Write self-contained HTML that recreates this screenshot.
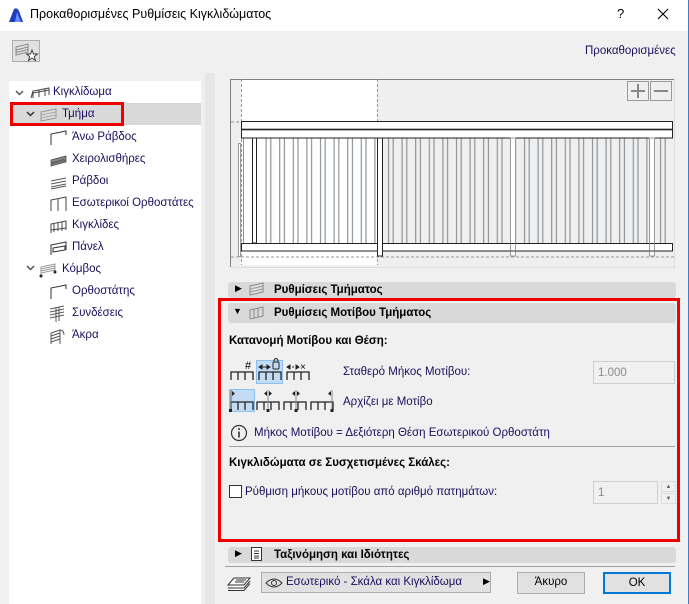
<!DOCTYPE html>
<html><head><meta charset="utf-8"><style>
*{box-sizing:border-box;margin:0;padding:0}
body{width:689px;height:604px;background:#f0f0f0;font-family:"Segoe UI","Liberation Sans","DejaVu Sans",sans-serif;font-size:11.5px;color:#000;position:relative;overflow:hidden}
.a{position:absolute;white-space:nowrap}
.tree span{position:absolute;white-space:nowrap;color:#1a0f5c}
.hdr{position:absolute;left:228px;width:448px;background:#d9d9d9;border-radius:3px}
.b{font-weight:bold}
.inp{position:absolute;background:#f0f0f0;border:1px solid #cfcfcf;color:#8a8a8a;padding:5px 4px}
.btn{position:absolute;background:#e1e1e1;border:1px solid #adadad;text-align:center;line-height:19px}
</style></head><body>
<!-- title bar -->
<div class="a" style="left:0;top:0;width:689px;height:31px;background:#fff"></div>
<div class="a" style="left:688px;top:0;width:1px;height:604px;background:#3c7fd1"></div>
<svg class="a" style="left:8px;top:7px" width="16" height="16"><rect x="0" y="0" width="16" height="16" fill="#fff"/><path d="M1 15 L6 2 Q9 0 11 4 L15 15 Z" fill="#1c3fbf"/><path d="M7 15 L9 5 L13 15Z" fill="#6e8cff"/></svg>
<div class="a" style="left:30px;top:7px;font-size:12.5px">Προκαθορισμένες Ρυθμίσεις Κιγκλιδώματος</div>
<div class="a" style="left:617px;top:6px;font-size:13px">?</div>
<svg class="a" style="left:657px;top:8px" width="12" height="12"><path d="M1 1 L11 11 M11 1 L1 11" stroke="#000" stroke-width="1.1"/></svg>
<!-- favorite button -->
<div class="a" style="left:12px;top:40px;width:28px;height:22px;border:1px solid #adadad;background:#e1e1e1"></div>
<svg class="a" style="left:14px;top:42px" width="26" height="20"><path d="M2 5 L14 2 L14 10 L2 13Z M2 8 L14 5 M2 10.5L14 7.5" stroke="#888" fill="none"/><path d="M18 8 L19.5 12 L23.5 12 L20.3 14.5 L21.5 18.5 L18 16 L14.5 18.5 L15.7 14.5 L12.5 12 L16.5 12Z" fill="#fff" stroke="#333" stroke-width="0.9"/></svg>
<div class="a" style="left:585px;top:45px;color:#1a0f5c">Προκαθορισμένες</div>
<!-- tree -->
<div class="a" style="left:9px;top:81px;width:192px;height:523px;background:#fff"></div>
<div class="a" style="left:205px;top:73px;width:10px;height:531px;background:#e6e6e6"></div>
<div class="a" style="left:10px;top:103px;width:191px;height:22px;background:#d9d9d9"></div>
<div class="a" style="left:10px;top:102px;width:114px;height:24px;border:3px solid #e00"></div>
<svg class="a" style="left:0;top:0" width="60" height="280"><g stroke="#555" stroke-width="1.5" fill="none"><path d="M16 91 L19.5 94.5 L23 91"/><path d="M27 112 L30.5 115.5 L34 112" stroke="#333"/><path d="M27 266 L30.5 269.5 L34 266"/></g></svg>
<div class="tree">
<svg class="a" style="left:30px;top:87px" width="22" height="12"><path d="M1 11 L3 4 L19 1 L19 8 M3 4 L3 11 M9 3 L9 10 M15 2 L15 9 M3 6 L19 3" stroke="#444" fill="none"/></svg>
<span style="left:53px;top:86px">Κιγκλίδωμα</span>
<svg class="a" style="left:40px;top:108px" width="18" height="14"><path d="M1 4 L16 1 L16 10 L1 13Z" fill="#ddd" stroke="#999"/><path d="M1 7 L16 4 M1 10 L16 7" stroke="#aaa"/></svg>
<span style="left:62px;top:108px">Τμήμα</span>
<svg class="a" style="left:50px;top:130px" width="18" height="16"><path d="M1 15 L1 4 L16 1 L16 5" stroke="#333" fill="none"/></svg>
<span style="left:72px;top:131px">Άνω Ράβδος</span>
<svg class="a" style="left:50px;top:152px" width="18" height="16"><path d="M1 8 L16 4 L16 7 L1 11Z M1 12 L16 8 L16 10 L1 14Z" fill="#888" stroke="#444" stroke-width="0.7"/></svg>
<span style="left:72px;top:153px">Χειρολισθήρες</span>
<svg class="a" style="left:50px;top:174px" width="18" height="16"><path d="M1 7 L16 4 M1 10 L16 7 M1 13 L16 10 M1 15 L16 12" stroke="#555" fill="none"/></svg>
<span style="left:72px;top:175px">Ράβδοι</span>
<svg class="a" style="left:50px;top:196px" width="18" height="16"><path d="M1 15 L1 4 L16 1 L16 15 M8 3 L8 15" stroke="#444" fill="none"/></svg>
<span style="left:72px;top:197px">Εσωτερικοί Ορθοστάτες</span>
<svg class="a" style="left:50px;top:218px" width="18" height="16"><path d="M1 15 L1 6 L16 3 L16 12 M4 6 L4 14 M8 5 L8 13 M12 4 L12 13 M1 12 L16 10" stroke="#444" fill="none"/></svg>
<span style="left:72px;top:219px">Κιγκλίδες</span>
<svg class="a" style="left:50px;top:240px" width="18" height="16"><path d="M1 15 L1 5 L16 2 L16 10 M3 8 L15 6 L15 10 L3 12Z" stroke="#333" fill="none"/></svg>
<span style="left:72px;top:241px">Πάνελ</span>
<svg class="a" style="left:38px;top:262px" width="20" height="16"><path d="M3 14 L3 5 L17 2 L17 10 M3 7 L17 4 M3 9 L17 6 M3 11 L17 8" stroke="#999" fill="none"/><circle cx="3" cy="14" r="1.5" fill="#222"/><circle cx="17" cy="10" r="1.5" fill="#222"/></svg>
<span style="left:62px;top:263px">Κόμβος</span>
<svg class="a" style="left:50px;top:284px" width="18" height="16"><path d="M1 15 L1 4 L16 1 L16 5" stroke="#333" fill="none"/></svg>
<span style="left:72px;top:285px">Ορθοστάτης</span>
<svg class="a" style="left:48px;top:305px" width="20" height="18"><path d="M2 4 L16 1 M2 7 L16 4 M2 10 L16 7 M2 13 L16 10 M8 3 L8 17 M11 2 L11 16" stroke="#555" fill="none"/></svg>
<span style="left:72px;top:307px">Συνδέσεις</span>
<svg class="a" style="left:48px;top:327px" width="20" height="18"><path d="M3 6 L12 3 Q16 3 16 8 M3 9 L12 6 M3 12 L12 9 M3 15 L12 12 M12 3 L12 17 M3 6 L3 17" stroke="#555" fill="none"/></svg>
<span style="left:72px;top:329px">Άκρα</span>
</div>
<!-- preview -->
<svg class="a" style="left:230px;top:79px" width="445" height="189">
<defs><pattern id="p" x="35.5" y="0" width="13.6" height="10" patternUnits="userSpaceOnUse"><rect x="0" y="0" width="1.2" height="10" fill="#8d949a"/><rect x="4.7" y="0" width="1.2" height="10" fill="#8d949a"/></pattern></defs>
<rect x="0" y="0" width="445" height="189" fill="#efefef"/>
<rect x="11" y="0" width="136" height="186" fill="#fff"/>
<path d="M0.5 0 V189 M0 0.5 H445" stroke="#808080"/>
<path d="M444.5 0 V189 M0 188.5 H445" stroke="#ddd"/>
<path d="M11.5 0 V186 M147.5 0 V186" stroke="#999" stroke-dasharray="3,2"/>
<path d="M1 43 H11 M1 178 H444" stroke="#999" stroke-dasharray="3,2"/>
<rect x="35" y="59" width="406" height="105" fill="url(#p)"/>
<rect x="13" y="59" width="1" height="105" fill="#8d949a"/>
<rect x="8.5" y="64.5" width="2" height="113" fill="#fff" stroke="#999"/>
<rect x="22.5" y="59" width="4" height="105" fill="#fff" stroke="#222"/>
<rect x="11.5" y="42.5" width="431" height="16.5" fill="#fff" stroke="#222"/>
<rect x="11.5" y="49.7" width="431" height="1.6" fill="#222"/>
<rect x="11.5" y="164.5" width="431" height="7.5" fill="#fff" stroke="#222"/>
<rect x="147.5" y="59" width="5" height="118" fill="#fff" stroke="#222"/>
<rect x="280.5" y="59" width="5" height="118" fill="#fff" stroke="#999"/>
<rect x="281" y="164" width="4" height="9" fill="#fff"/>
<rect x="419.5" y="59" width="5" height="118" fill="#fff" stroke="#999"/>
<rect x="420" y="164" width="4" height="9" fill="#fff"/>
<path d="M280.5 164.5 H285.5 M280.5 172 H285.5 M419.5 164.5 H424.5 M419.5 172 H424.5" stroke="#222"/>
<rect x="397.5" y="2.5" width="21" height="19" fill="#efefef" stroke="#999"/>
<rect x="420.5" y="2.5" width="21" height="19" fill="#efefef" stroke="#999"/>
<path d="M401 12 H415 M408 5 V19 M424 12 H438" stroke="#888" stroke-width="2"/>
</svg>
<!-- section headers -->
<div class="hdr" style="top:282px;height:16px"></div>
<div class="a" style="left:235px;top:283px;font-size:9px">▶</div>
<svg class="a" style="left:249px;top:282px" width="16" height="14"><path d="M1 4 L14 1 L14 10 L1 13Z" fill="#ddd" stroke="#888"/><path d="M1 7 L14 4 M1 10 L14 7" stroke="#999"/></svg>
<div class="a b" style="left:274px;top:284px">Ρυθμίσεις Τμήματος</div>
<div class="a" style="left:218px;top:298px;width:462px;height:244px;border:3px solid #e00"></div>
<div class="hdr" style="top:303px;height:20px"></div>
<div class="a" style="left:233px;top:306px;font-size:9px">▼</div>
<svg class="a" style="left:249px;top:305px" width="16" height="15"><path d="M1 14 L1 5 L14 2 L14 11 L1 14 M5 4 L5 13 M9 3 L9 12" stroke="#888" fill="none"/></svg>
<div class="a b" style="left:274px;top:307px">Ρυθμίσεις Μοτίβου Τμήματος</div>
<div class="a b" style="left:229px;top:335px">Κατανομή Μοτίβου και Θέση:</div>
<!-- motif icons -->
<div class="a" style="left:256px;top:360px;width:27px;height:24px;background:#c4dcf3;border:1px solid #8cc0ee"></div>
<div class="a" style="left:229px;top:389px;width:26px;height:23px;background:#c4dcf3;border:1px solid #8cc0ee"></div>
<svg class="a" style="left:229px;top:358px" width="112" height="56">
<g stroke="#222" fill="none" stroke-width="1.3">
<path d="M2 22 V14 H24 V22 M9 14 V22 M16 14 V22"/>
<path d="M30 22 V14 H52 V22 M37 14 V22 M44 14 V22"/>
<path d="M58 22 V14 H80 V22 M65 14 V22 M72 14 V22"/>
<path d="M2 52 V44 H24 V52 M9 44 V52 M16 44 V52"/>
<path d="M28 52 V44 H50 V52 M35 44 V52 M42 44 V52"/>
<path d="M55 52 V44 H77 V52 M62 44 V52 M69 44 V52"/>
<path d="M82 52 V44 H104 V52 M89 44 V52 M96 44 V52"/>
</g>
<text x="16" y="11" font-size="11" font-family="Liberation Sans">#</text>
<path d="M30 9 H41 M30 9 l3 -2 v4z M41 9 l-3 -2 v4z" stroke="#222" fill="#222"/>
<rect x="44" y="4" width="6" height="7" rx="1" fill="none" stroke="#222"/><path d="M45 4 V2 Q47 -1 49 2 V4" stroke="#222" fill="none"/>
<path d="M59 9 h2 M63 9 h2 M67 9 h2 M58 9 l3-2 v4z M70 9 l-3-2 v4z" stroke="#222" fill="#222"/>
<text x="71" y="12" font-size="10" font-family="Liberation Sans">×</text>
<path d="M2 32 V52" stroke="#666"/><path d="M3 33 l3 2.5 l-3 2.5z" fill="#222"/>
<path d="M39 32 V52 M67 32 V52 M103 32 V52" stroke="#888"/>
<path d="M38 33 l-3 2.5 l3 2.5z M40 33 l3 2.5 l-3 2.5z M66 33 l-3 2.5 l3 2.5z M68 33 l3 2.5 l-3 2.5z M102 33 l-3 2.5 l3 2.5z" fill="#222"/>
<rect x="0" y="51" width="3" height="3" fill="#222"/><rect x="37.5" y="51" width="3" height="3" fill="#222"/><rect x="65.5" y="51" width="3" height="3" fill="#222"/><rect x="101.5" y="51" width="3" height="3" fill="#222"/>
</svg>
<div class="a" style="left:343px;top:366px;color:#1a0f5c">Σταθερό Μήκος Μοτίβου:</div>
<div class="inp" style="left:593px;top:361px;width:82px;height:23px">1.000</div>
<div class="a" style="left:343px;top:396px;color:#1a0f5c">Αρχίζει με Μοτίβο</div>
<svg class="a" style="left:230px;top:424px" width="18" height="18"><circle cx="9" cy="9" r="7.5" fill="none" stroke="#333" stroke-width="1.2"/><path d="M9 7.5 V13.5" stroke="#333" stroke-width="1.6"/><circle cx="9" cy="5" r="1" fill="#333"/></svg>
<div class="a" style="left:254px;top:427px;color:#1a0f5c">Μήκος Μοτίβου = Δεξιότερη Θέση Εσωτερικού Ορθοστάτη</div>
<div class="a" style="left:229px;top:446px;width:446px;height:1px;background:#a0a0a0"></div>
<div class="a b" style="left:229px;top:457px">Κιγκλιδώματα σε Συσχετισμένες Σκάλες:</div>
<div class="a" style="left:229px;top:485px;width:13px;height:13px;background:#fff;border:1px solid #333"></div>
<div class="a" style="left:245px;top:486px;color:#1a0f5c">Ρύθμιση μήκους μοτίβου από αριθμό πατημάτων:</div>
<div class="inp" style="left:593px;top:481px;width:65px;height:23px">1</div>
<div class="a" style="left:661px;top:481px;width:15px;height:11px;border:1px solid #ddd;font-size:6px;text-align:center;color:#666;line-height:10px">▲</div>
<div class="a" style="left:661px;top:493px;width:15px;height:11px;border:1px solid #ddd;font-size:6px;text-align:center;color:#666;line-height:10px">▼</div>
<div class="hdr" style="top:547px;height:16px"></div>
<div class="a" style="left:235px;top:548px;font-size:9px">▶</div>
<svg class="a" style="left:251px;top:547px" width="12" height="15"><rect x="0.5" y="0.5" width="10" height="13" fill="#fff" stroke="#333"/><path d="M3 4 H8 M3 6.5 H8 M3 9 H8 M3 11 H8" stroke="#333"/></svg>
<div class="a b" style="left:274px;top:549px">Ταξινόμηση και Ιδιότητες</div>
<div class="a" style="left:225px;top:566px;width:450px;height:1px;background:#a0a0a0"></div>
<!-- bottom -->
<svg class="a" style="left:226px;top:574px" width="26" height="18"><path d="M2 11 L8 4 H24 L18 11Z M2 14 L18 14 L24 7 M2 16.5 H18 L24 9.5" stroke="#333" fill="#fff"/><path d="M10 6 H20 M9 8 H18" stroke="#333"/></svg>
<div class="btn" style="left:261px;top:572px;width:230px;height:21px;text-align:left;padding-left:24px;color:#1a0f5c">Εσωτερικό - Σκάλα και Κιγκλίδωμα</div>
<svg class="a" style="left:265px;top:577px" width="18" height="12"><path d="M1 6 Q9 -2 17 6 Q9 14 1 6Z" fill="none" stroke="#333"/><circle cx="9" cy="6" r="2.5" fill="none" stroke="#333"/></svg>
<div class="a" style="left:483px;top:576px;font-size:9px">▶</div>
<div class="btn" style="left:517px;top:572px;width:68px;height:22px">Άκυρο</div>
<div class="btn" style="left:603px;top:572px;width:68px;height:22px;border:2px solid #0078d7;line-height:18px">OK</div>
</body></html>
